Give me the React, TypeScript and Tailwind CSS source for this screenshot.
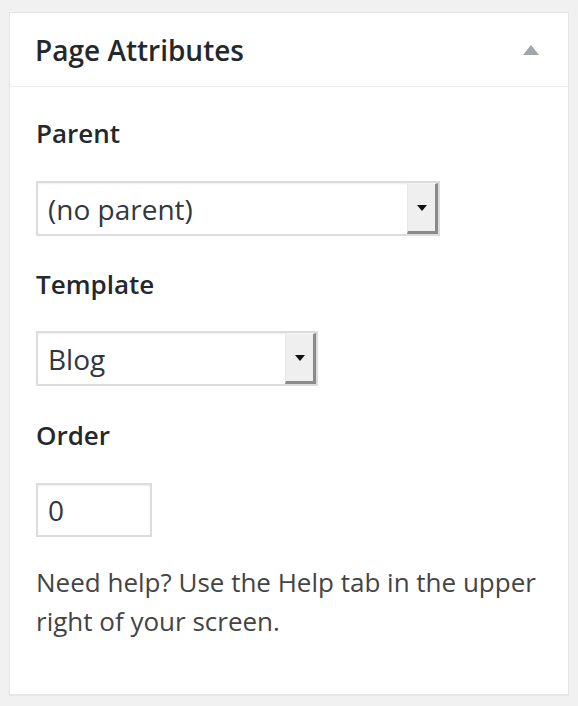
const font = { fontFamily: '"Open Sans", "Noto Sans", sans-serif' };

function SelectBox({ value, width }: { value: string; width: string }) {
  return (
    <div
      className={`flex h-[55px] ${width} items-stretch border-2 border-[#dcdcdc] bg-white shadow-[inset_0_1px_2px_rgba(0,0,0,0.07)]`}
    >
      <div className="flex flex-1 items-center pl-[10px] text-[28px] text-[#32373c]">{value}</div>
      <div className="flex w-[31px] items-center justify-center border-t border-l border-t-[#f4f4f4] border-l-[#e8e8e8] border-r-[3px] border-b-[3px] border-r-[#8a8a8a] border-b-[#8a8a8a] bg-[#efefef]">
        <svg width="10" height="6" viewBox="0 0 10 6">
          <path d="M0 0h10L5 6z" fill="#111" />
        </svg>
      </div>
    </div>
  );
}

const labelCls = 'text-[26px] font-semibold leading-[34px] text-[#23282d]';

export default function App() {
  return (
    <div className="min-h-[706px] bg-[#f1f1f1] pt-[12px] pl-[9px]" style={font}>
      <div className="w-[560px] border border-[#e5e5e5] bg-white shadow-[0_1px_1px_rgba(0,0,0,0.04)]">
        <div className="flex h-[74px] items-center justify-between border-b border-[#eeeeee] pl-[25px] pr-[29px]">
          <h2 className="text-[28px] font-semibold text-[#23282d]">Page Attributes</h2>
          <svg width="16" height="10" viewBox="0 0 16 10">
            <path d="M8 0l8 10H0z" fill="#a0a5aa" />
          </svg>
        </div>
        <div className="pl-[26px] pr-[25px] pt-[29px] pb-[53px] text-[#444]">
          <p className={labelCls}>Parent</p>
          <div className="mt-[31px]">
            <SelectBox value="(no parent)" width="w-[404px]" />
          </div>
          <p className={`mt-[31px] ${labelCls}`}>Template</p>
          <div className="mt-[30px]">
            <SelectBox value="Blog" width="w-[282px]" />
          </div>
          <p className={`mt-[32px] ${labelCls}`}>Order</p>
          <input
            defaultValue="0"
            className="mt-[31px] block h-[54px] w-[116px] border-2 border-[#dcdcdc] bg-white px-[10px] text-[28px] text-[#32373c] shadow-[inset_0_1px_2px_rgba(0,0,0,0.07)] outline-none"
          />
          <p className="mt-[26px] text-[26px] leading-[39px] text-[#444]">
            Need help? Use the Help tab in the upper right of your screen.
          </p>
        </div>
      </div>
    </div>
  );
}
